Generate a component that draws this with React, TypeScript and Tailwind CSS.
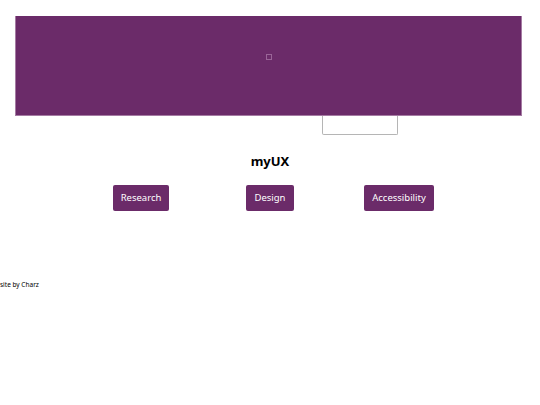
export default function App() {
  const links = ['Research', 'Design', 'Accessibility']

  return (
    <div className="min-h-[405px] bg-white font-['Noto_Sans',sans-serif] text-black">
      <div className="px-[15px] pt-[16px] pr-[18px]">
        {/* Banner */}
        <div className="h-[100px] bg-[#6b2b69] border-l border-r border-b border-[#a57ba3] flex items-center justify-center">
          <div className="w-[6px] h-[6px] border border-[#9a6598] -mt-[17px]" />
        </div>
      </div>

      {/* Search box */}
      <div className="pl-[322px]">
        <input
          type="text"
          aria-label="search"
          className="block w-[76px] h-[19px] border border-[#b5b5b5] border-t-0 rounded-b-[2px] bg-white outline-none"
        />
      </div>

      <h1 className="mt-[17px] text-center text-[13px] leading-[18px] font-bold">myUX</h1>

      <nav className="mt-[15px] w-[387px] mx-auto grid grid-cols-3">
        {links.map((l) => (
          <div key={l} className="flex justify-center">
            <a
              href="#"
              className="h-[26px] px-[8px] flex items-center bg-[#6b2b69] text-white text-[9.5px] rounded-[2px]"
            >
              {l}
            </a>
          </div>
        ))}
      </nav>

      <p className="mt-[69px] text-[6.5px] leading-[9px]">site by Charz</p>
    </div>
  )
}
